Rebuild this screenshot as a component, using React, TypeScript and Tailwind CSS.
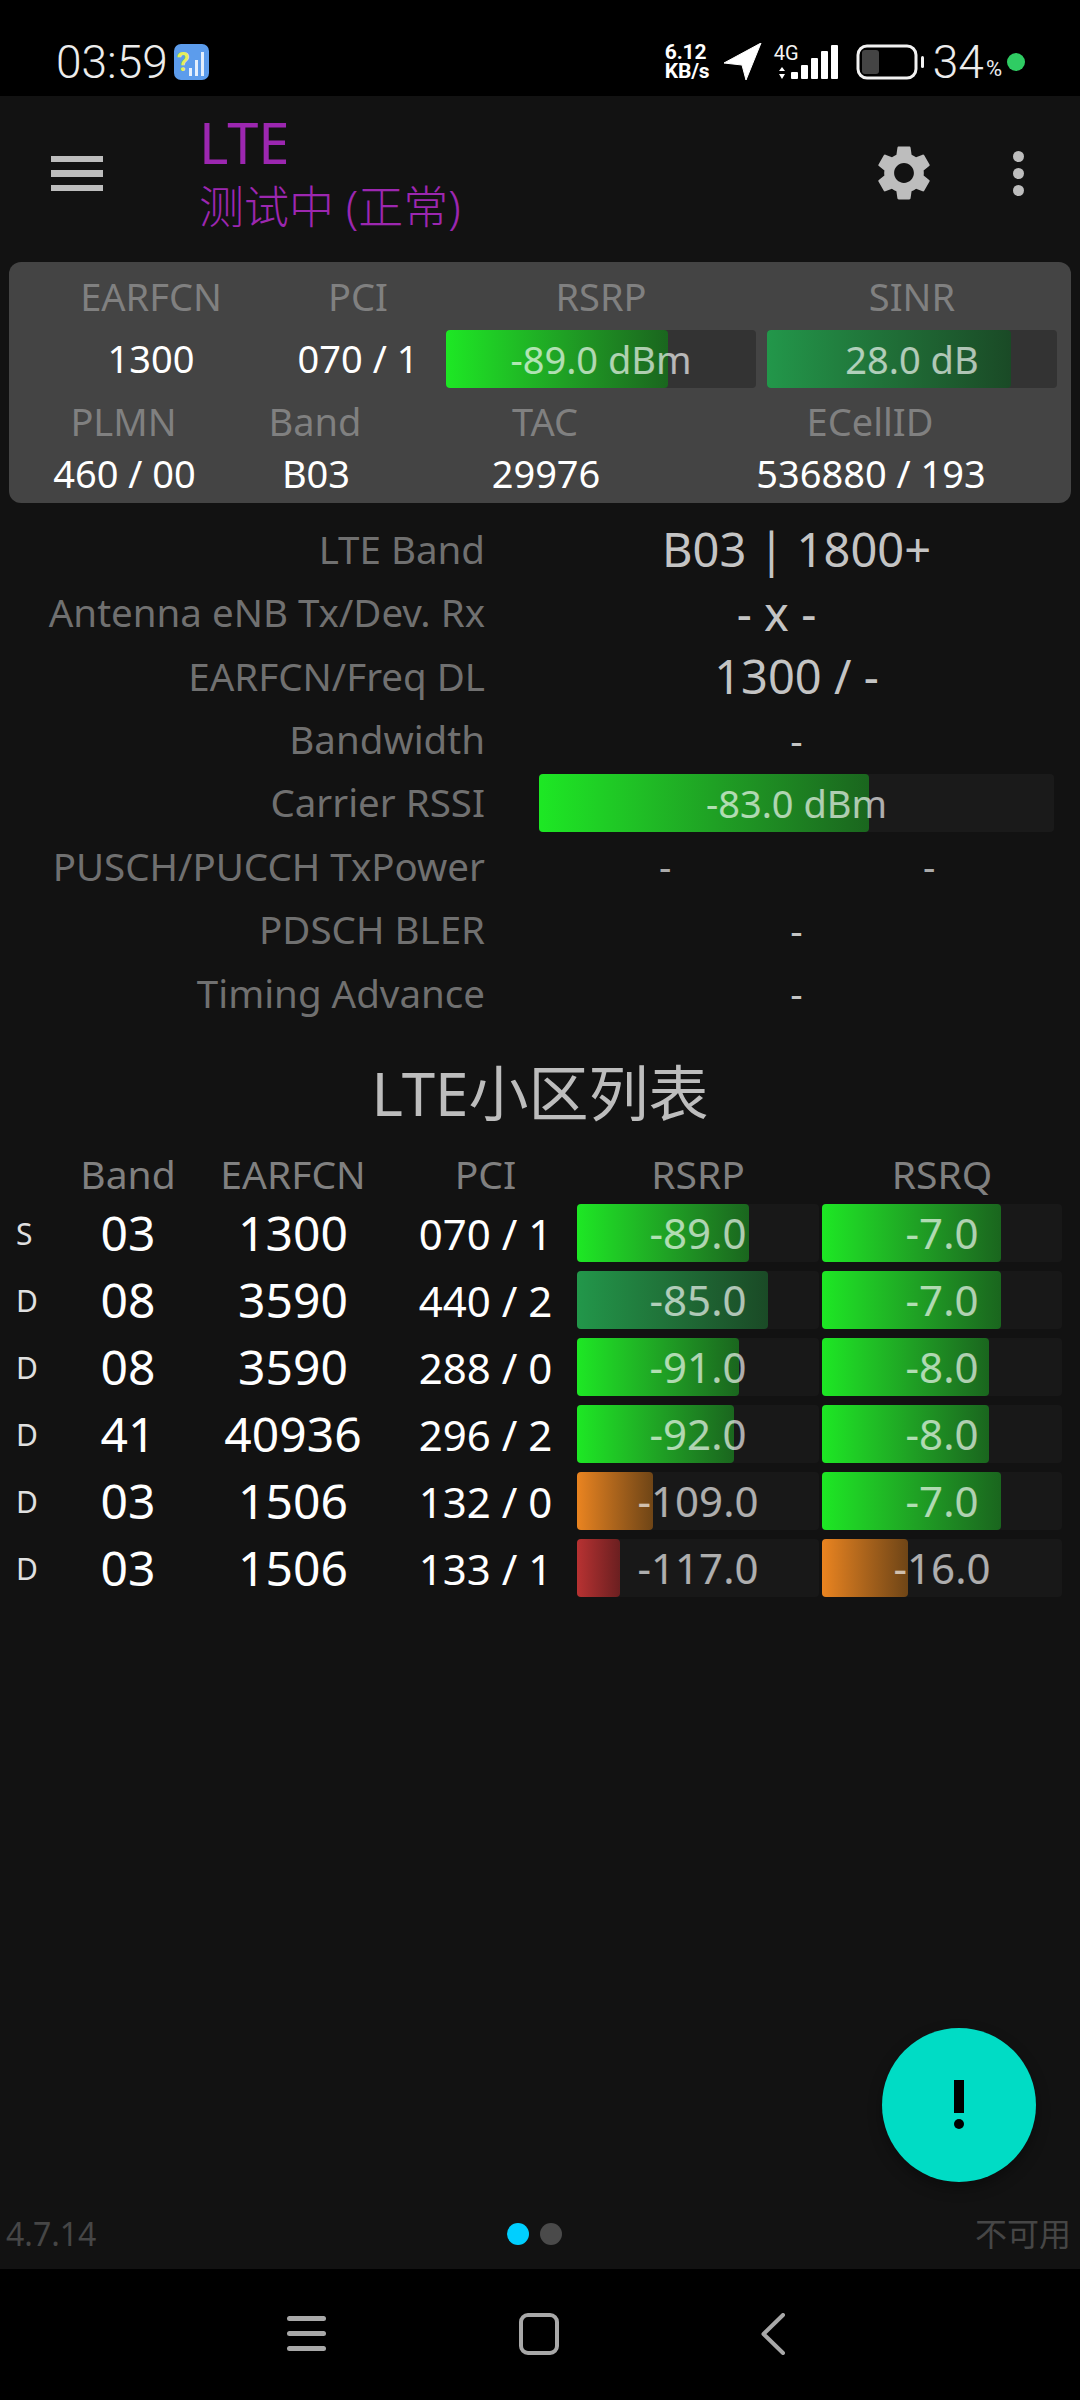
import React from 'react';

type Tone = 'green' | 'teal' | 'orange' | 'red';

const tones: Record<Tone, string> = {
  green: 'bg-linear-to-r from-[#1de824] to-[#1a661e]',
  teal: 'bg-linear-to-r from-[#22974a] to-[#1a4a26]',
  orange: 'bg-linear-to-r from-[#ea8420] to-[#6f4516]',
  red: 'bg-linear-to-r from-[#b83232] to-[#6b1f20]',
};

const Bar: React.FC<{ fill: number; text: string; tone: Tone; track: string; size?: string; className?: string }> = ({ fill, text, tone, track, size = 'text-[42px]', className = '' }) => (
  <div className={`relative flex items-center justify-center rounded-[4px] ${track} ${className}`}>
    <div className={`absolute left-0 top-0 bottom-0 rounded-[4px] ${tones[tone]}`} style={{ width: fill }} />
    <span className={`relative ${size} leading-none text-white/65`}>{text}</span>
  </div>
);

const cells: [string, string, string, string, number, Tone, string, number, Tone][] = [
  ['S', '03', '1300', '070 / 1', 172, 'green', '-89.0', 179, 'green'],
  ['D', '08', '3590', '440 / 2', 191, 'teal', '-85.0', 179, 'green'],
  ['D', '08', '3590', '288 / 0', 162, 'green', '-91.0', 167, 'green'],
  ['D', '41', '40936', '296 / 2', 157, 'green', '-92.0', 167, 'green'],
  ['D', '03', '1506', '132 / 0', 76, 'orange', '-109.0', 179, 'green'],
  ['D', '03', '1506', '133 / 1', 43, 'red', '-117.0', 86, 'orange'],
];
const rsrq = ['-7.0', '-7.0', '-8.0', '-8.0', '-7.0', '-16.0'];

const info: [string, React.ReactNode][] = [
  ['LTE Band', <span className="text-[47px] text-[#c4c4c4]">B03 | 1800+</span>],
  ['Antenna eNB Tx/Dev. Rx', <div className="pr-[40px] text-[47px] text-[#c4c4c4]">- x -</div>],
  ['EARFCN/Freq DL', <span className="text-[47px] text-[#c4c4c4]">1300 / -</span>],
  ['Bandwidth', <span className="text-[#c4c4c4]">-</span>],
  ['Carrier RSSI', <Bar fill={330} text="-83.0 dBm" tone="green" track="bg-[#1a1a1a]" size="text-[38px]" className="h-[58px]" />],
  ['PUSCH/PUCCH TxPower', <div className="grid grid-cols-2 text-[#aaaaaa]"><span className="pr-[5px]">-</span><span className="pl-[8px]">-</span></div>],
  ['PDSCH BLER', <span className="text-[#c4c4c4]">-</span>],
  ['Timing Advance', <span className="text-[#c4c4c4]">-</span>],
];

const StatusBar = () => (
  <div className="h-24 shrink-0 bg-black flex items-center pl-[56px] pr-[55px] pt-[28px] text-[#ececec] font-['Roboto',sans-serif]">
    <span className="text-[46px] font-light leading-none">03:59</span>
    <div className="relative ml-[6px] w-[35px] h-[36px] rounded-[7px] bg-[#5c9cec] overflow-hidden">
      <span className="absolute left-[3px] top-[2px] text-[26px] leading-[32px] font-bold text-[#e6ee5c]">?</span>
      <svg viewBox="0 0 35 36" className="absolute inset-0 w-full h-full" fill="#e4effc">
        <rect x="15" y="24" width="3" height="8" /><rect x="21" y="16" width="3" height="16" /><rect x="27" y="8" width="3" height="24" />
      </svg>
    </div>
    <div className="ml-auto flex items-center">
      <div className="w-[50px] text-white font-bold text-[21px] leading-[19px] tracking-[-0.2px]">
        <div>6.12</div>
        <div>KB/s</div>
      </div>
      <svg viewBox="0 0 38 38" className="ml-[9px] w-[38px] h-[38px]" fill="#fff"><path d="M37 0 L0 20 L18 22 L22 37 Z" strokeLinejoin="round" stroke="#fff" strokeWidth="1" /></svg>
      <div className="relative ml-[12px] w-[72px] h-[36px]">
        <span className="absolute left-0 top-[-1px] text-[20px] leading-[20px] text-[#f4f4f4]">4G</span>
        <svg viewBox="0 0 72 36" className="w-[72px] h-[36px]" fill="#fff">
          <path d="M8 23 L11 27 L5 27 Z M8 35 L5 30 L11 30 Z" />
          <rect x="17" y="28" width="7" height="7" rx="1" /><rect x="27" y="21" width="7" height="14" rx="1" /><rect x="37" y="14" width="7" height="21" rx="1" /><rect x="47" y="7" width="7" height="28" rx="1" /><rect x="57" y="1" width="7" height="34" rx="1" />
        </svg>
      </div>
      <svg viewBox="0 0 70 36" className="ml-[10px] w-[70px] h-[36px]" fill="none">
        <rect x="2" y="2" width="58" height="32" rx="9" stroke="#f2f2f2" strokeWidth="3" />
        <rect x="6" y="6" width="17" height="24" rx="3" fill="#444" />
        <rect x="65" y="12" width="3" height="12" rx="1.5" fill="#f2f2f2" />
      </svg>
      <span className="ml-[7px] text-[46px] font-light leading-none">34</span>
      <span className="text-[22px] mt-[14px] ml-[2px] leading-none">%</span>
      <span className="ml-[5px] w-[18px] h-[18px] rounded-full bg-[#2fcc63]" />
    </div>
  </div>
);

const AppBar = () => (
  <div className="h-[159px] shrink-0 flex items-center pl-[51px] pr-[56px] pb-[5px]">
    <div className="w-[52px] flex flex-col gap-[8px]">
      <span className="h-[6px] bg-[#bdbdbd]" /><span className="h-[7px] bg-[#bdbdbd]" /><span className="h-[6px] bg-[#bdbdbd]" />
    </div>
    <div className="ml-[96px] text-[#9c27b0] pt-[5px]">
      <div className="text-[56px] leading-[62px]">LTE</div>
      <div className="text-[45px] leading-[67px] whitespace-nowrap font-light">测试中 (正常)</div>
    </div>
    <svg viewBox="0 0 24 24" className="ml-auto mr-[76px] w-[66px] h-[66px]" fill="#bdbdbd">
      <path d="M19.14 12.94c.04-.3.06-.61.06-.94 0-.32-.02-.64-.07-.94l2.03-1.58c.18-.14.23-.41.12-.61l-1.92-3.32c-.12-.22-.37-.29-.59-.22l-2.39.96c-.5-.38-1.03-.7-1.62-.94l-.36-2.54c-.04-.24-.24-.41-.48-.41h-3.84c-.24 0-.43.17-.47.41l-.36 2.54c-.59.24-1.13.57-1.62.94l-2.39-.96c-.22-.08-.47 0-.59.22L2.74 8.87c-.12.21-.08.47.12.61l2.03 1.58c-.05.3-.09.63-.09.94s.02.64.07.94l-2.03 1.58c-.18.14-.23.41-.12.61l1.92 3.32c.12.22.37.29.59.22l2.39-.96c.5.38 1.03.7 1.62.94l.36 2.54c.05.24.24.41.48.41h3.84c.24 0 .44-.17.47-.41l.36-2.54c.59-.24 1.13-.56 1.62-.94l2.39.96c.22.08.47 0 .59-.22l1.92-3.32c.12-.22.07-.47-.12-.61l-2.01-1.58zM12 15.6c-1.98 0-3.6-1.62-3.6-3.6s1.62-3.6 3.6-3.6 3.6 1.62 3.6 3.6-1.62 3.6-3.6 3.6z" />
    </svg>
    <div className="flex flex-col gap-[6px]">
      <span className="w-[11px] h-[11px] rounded-full bg-[#bdbdbd]" /><span className="w-[11px] h-[11px] rounded-full bg-[#bdbdbd]" /><span className="w-[11px] h-[11px] rounded-full bg-[#bdbdbd]" />
    </div>
  </div>
);

const ServingPanel = () => (
  <div className="mx-[9px] mt-[7px] h-[241px] shrink-0 rounded-[12px] bg-[#444444] pt-[9px] text-center text-[38px] leading-[50px]">
    <div className="grid grid-cols-[266px_162px_310px_11px_290px] pl-[9px] text-[#808080]">
      <span>EARFCN</span><span className="pr-[14px]">PCI</span><span>RSRP</span><span /><span>SINR</span>
    </div>
    <div className="mt-[9px] h-[58px] grid grid-cols-[266px_162px_310px_11px_290px] pl-[9px] items-center text-white">
      <span className="pb-[3px]">1300</span>
      <span className="pr-[14px] pb-[3px]">070 / 1</span>
      <Bar fill={222} text="-89.0 dBm" tone="green" track="bg-[#333333]" size="text-[38px]" className="h-[58px]" />
      <span />
      <Bar fill={244} text="28.0 dB" tone="teal" track="bg-[#333333]" size="text-[38px]" className="h-[58px]" />
    </div>
    <div className="mt-[8px] grid grid-cols-[217px_166px_294px_356px] pl-[6px] text-[#808080]">
      <span>PLMN</span><span>Band</span><span>TAC</span><span>ECellID</span>
    </div>
    <div className="mt-[2px] grid grid-cols-[217px_166px_294px_356px] pl-[7px] text-white">
      <span>460 / 00</span><span>B03</span><span>29976</span><span>536880 / 193</span>
    </div>
  </div>
);

const InfoList = () => (
  <div className="mt-[15px] shrink-0 text-[38.5px]">
    {info.map(([label, value]) => (
      <div key={label} className="h-[63.4px] grid grid-cols-[485px_515px] gap-x-[54px] items-center">
        <span className="text-right text-[#707070] whitespace-nowrap">{label}</span>
        <div className="text-center leading-none">{value}</div>
      </div>
    ))}
  </div>
);

const CellTable = () => (
  <div className="shrink-0">
    <h2 className="mt-[34px] h-[68px] text-center text-[60px] leading-[68px] font-normal text-[#bdbdbd]">LTE小区列表</h2>
    <div className="mt-[18px] h-[48px] grid grid-cols-[60px_136px_194px_187px_242px_3px_240px] items-center text-center text-[39px] text-[#808080]">
      <span /><span>Band</span><span>EARFCN</span><span className="pl-[4px]">PCI</span><span>RSRP</span><span /><span>RSRQ</span>
    </div>
    <div className="mt-[4px]">
      {cells.map((row, i) => (
        <div key={i} className="h-[67px] grid grid-cols-[60px_136px_194px_187px_242px_3px_240px] items-center text-center text-white">
          <span className="pl-[16px] text-left text-[30px] text-[#e0e0e0]">{row[0]}</span>
          <span className="text-[48px]">{row[1]}</span>
          <span className="text-[48px]">{row[2]}</span>
          <span className="pl-[4px] text-[42px] whitespace-nowrap">{row[3]}</span>
          <Bar fill={row[4]} text={row[6]} tone={row[5]} track="bg-[#181818]" className="h-[58px]" />
          <span />
          <Bar fill={row[7]} text={rsrq[i]} tone={row[8]} track="bg-[#181818]" className="h-[58px]" />
        </div>
      ))}
    </div>
  </div>
);

const Footer = () => (
  <div className="h-[72px] shrink-0 grid grid-cols-[1fr_auto_1fr] items-center px-[6px] pt-[2px] text-[32px]">
    <span className="text-[#464646]">4.7.14</span>
    <div className="flex items-center gap-[11px] pr-[12px]">
      <span className="w-[22px] h-[22px] rounded-full bg-[#00cfff]" />
      <span className="w-[22px] h-[22px] rounded-full bg-[#4a4a4a]" />
    </div>
    <span className="pr-[3px] text-right text-[32px] text-[#464646]">不可用</span>
  </div>
);

const NavBar = () => (
  <div className="h-[131px] shrink-0 bg-black flex items-start pt-[44px] pl-[287px]">
    <div className="w-[39px] flex flex-col gap-[10px] pt-[3px]">
      <span className="h-[5px] rounded-full bg-[#a8a8a8]" /><span className="h-[5px] rounded-full bg-[#a8a8a8]" /><span className="h-[5px] rounded-full bg-[#a8a8a8]" />
    </div>
    <div className="ml-[193px] w-[40px] h-[42px] rounded-[9px] border-[4px] border-[#a8a8a8]" />
    <svg viewBox="0 0 26 42" className="ml-[201px] w-[26px] h-[42px]" fill="none" stroke="#a8a8a8" strokeWidth="4" strokeLinecap="round" strokeLinejoin="round">
      <path d="M23 2 L3.5 21 L23 40" />
    </svg>
  </div>
);

const App: React.FC = () => (
  <div className="relative w-[1080px] h-[2400px] flex flex-col bg-[#121212] overflow-hidden font-['Noto_Sans','Noto_Sans_CJK_SC',sans-serif]">
    <StatusBar />
    <AppBar />
    <ServingPanel />
    <InfoList />
    <CellTable />
    <div className="flex-1" />
    <Footer />
    <NavBar />
    <div className="absolute left-[882px] top-[2028px] w-[154px] h-[154px] rounded-full bg-[#00dcc5] shadow-[0_6px_14px_rgba(0,0,0,0.35)] flex flex-col items-center pt-[52px]">
      <span className="w-[10px] h-[33px] bg-black" />
      <span className="mt-[6px] w-[10px] h-[10px] rounded-full bg-black" />
    </div>
  </div>
);

export default App;
